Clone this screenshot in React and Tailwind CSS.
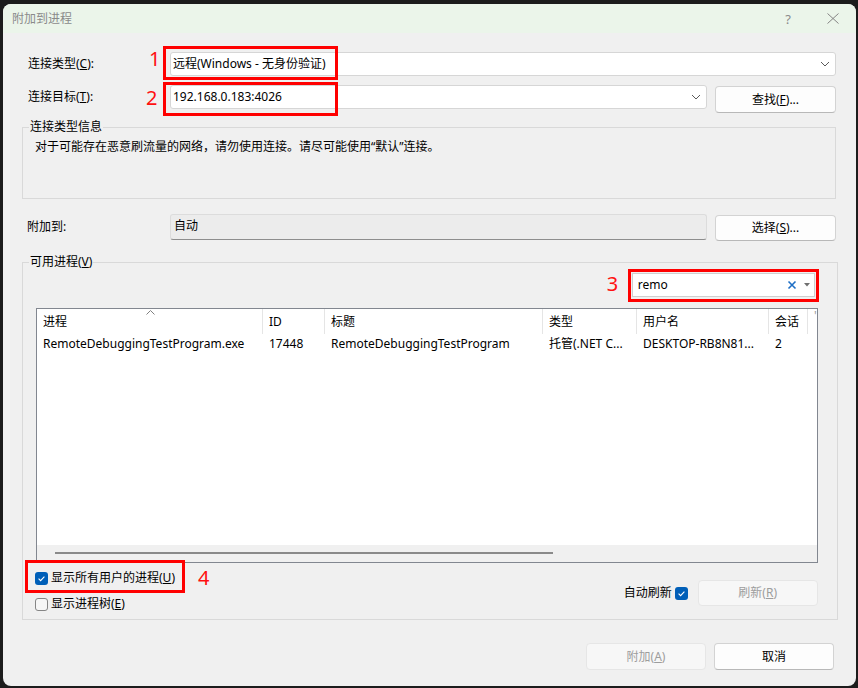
import React from "react";

const columns = [
  { label: "进程", cls: "w-[226px]", value: "RemoteDebuggingTestProgram.exe" },
  { label: "ID", cls: "w-[62px]", value: "17448" },
  { label: "标题", cls: "w-[218px]", value: "RemoteDebuggingTestProgram" },
  { label: "类型", cls: "w-[94px]", value: "托管(.NET C..." },
  { label: "用户名", cls: "w-[132px]", value: "DESKTOP-RB8N81..." },
  { label: "会话", cls: "w-[39px]", value: "2" },
];

function Chevron() {
  return (
    <svg width="10" height="6" viewBox="0 0 10 6" className="shrink-0">
      <path d="M1 1 L5 5 L9 1" fill="none" stroke="#5a5a5a" strokeWidth="1" />
    </svg>
  );
}

function Check({ checked }) {
  if (!checked) {
    return <span className="block w-[13px] h-[13px] rounded-[3px] border border-[#858585] bg-[#f6f6f6] shrink-0" />;
  }
  return (
    <span className="flex items-center justify-center w-[13px] h-[13px] rounded-[3px] bg-[#005fb8] shrink-0">
      <svg width="13" height="13" viewBox="0 0 13 13">
        <path d="M3.6 6.7 L5.6 8.6 L9.4 4.6" fill="none" stroke="#ffffff" strokeWidth="1.1" />
      </svg>
    </span>
  );
}

function Button({ children, disabled, className = "" }) {
  return (
    <div
      className={`flex items-center justify-center rounded-[4px] border ${
        disabled
          ? "bg-[#f7f7f7] border-[#e6e6e6] text-[#9d9d9d]"
          : "bg-[#fdfdfd] border-[#d3d3d3] border-b-[#b8b8b8] text-black"
      } ${className}`}
    >
      {children}
    </div>
  );
}

function Mark({ children, className }) {
  return (
    <span className={`absolute text-[20px] leading-[24px] text-[#ff1010] font-['Noto_Sans',sans-serif] ${className}`}>
      {children}
    </span>
  );
}

export default function App() {
  return (
    <div className="w-[858px] h-[688px] bg-[#1c1c1c] pt-[4px] pl-[3px] text-[12px] leading-[16px] text-black font-['Noto_Sans','Noto_Sans_CJK_SC',sans-serif]">
      <div className="w-[853px] h-[682px] bg-[#f0f0f0] rounded-[8px] overflow-hidden flex flex-col">
        {/* title bar */}
        <div className="h-[29px] bg-[#ebf5ea] flex items-center pl-[9px] pr-[13px] text-[#8a8a8a] shrink-0">
          <span>附加到进程</span>
          <span className="ml-auto w-[20px] text-center text-[13px] text-[#8a8a8a]">?</span>
          <span className="ml-[25px] w-[20px] flex justify-center">
            <svg width="12" height="11" viewBox="0 0 12 11">
              <path d="M0.5 0.5 L11.5 10.5 M11.5 0.5 L0.5 10.5" stroke="#858585" strokeWidth="1" />
            </svg>
          </span>
        </div>

        <div className="pl-[19px] pr-[20px] flex flex-col">
          {/* connection type */}
          <div className="flex items-center h-[24px] mt-[19px]">
            <span className="w-[148px] pl-[6px] shrink-0">连接类型(<u>C</u>):</span>
            <div className="relative flex-1 h-[24px] flex items-center bg-white border border-[#d6d6d6] rounded-[3px] pl-[2px] pr-[5px]">
              <span>远程(Windows - 无身份验证)</span>
              <span className="ml-auto"><Chevron /></span>
              <span className="absolute left-[-8px] top-[-7px] w-[175px] h-[34px] border-[3px] border-[#ff0000]" />
              <Mark className="left-[-22px] top-[-6px]">1</Mark>
            </div>
          </div>

          {/* connection target */}
          <div className="flex items-start mt-[9px]">
            <span className="w-[148px] pl-[6px] shrink-0 h-[24px] flex items-center">连接目标(<u>T</u>):</span>
            <div className="relative flex-1 h-[24px] flex items-center bg-white border border-[#d6d6d6] rounded-[3px] pl-[2px] pr-[5px]">
              <span>192.168.0.183:4026</span>
              <span className="ml-auto"><Chevron /></span>
              <span className="absolute left-[-8px] top-[-4px] w-[175px] h-[34px] border-[3px] border-[#ff0000]" />
              <Mark className="left-[-25px] top-[0px]">2</Mark>
            </div>
            <Button className="ml-[8px] w-[121px] h-[27px] mt-[1px]">查找(<u>F</u>)...</Button>
          </div>

          {/* info group */}
          <fieldset className="mt-[6px] h-[80px] border border-[#d9d9d9] px-[6px]">
            <legend className="px-[1px]">连接类型信息</legend>
            <div className="pl-[6px] pt-[4px]">对于可能存在恶意刷流量的网络，请勿使用连接。请尽可能使用“默认”连接。</div>
          </fieldset>

          {/* attach to */}
          <div className="flex items-start mt-[15px]">
            <span className="w-[148px] pl-[5px] shrink-0 h-[26px] flex items-center">附加到:</span>
            <div className="flex-1 h-[26px] flex items-center bg-[#ececec] border border-[#dcdcdc] border-b-[#8d8d8d] rounded-[3px] pl-[3px] pb-[2px]">
              自动
            </div>
            <Button className="ml-[8px] w-[121px] h-[26px] mt-[1px]">选择(<u>S</u>)...</Button>
          </div>

          {/* processes group */}
          <fieldset className="mt-[13px] h-[366px] border border-[#d9d9d9] px-[6px]">
            <legend className="px-[1px]">可用进程(<u>V</u>)</legend>
            <div className="pl-[7px] pr-[13px] flex flex-col">
              <div className="flex justify-end mt-[3px] mr-[3px]">
                <div className="relative w-[183px] h-[24px] bg-white border border-[#cfcfcf] flex items-center pl-[5px] pr-[3px]">
                  <span>remo</span>
                  <span className="ml-auto">
                    <svg width="10" height="10" viewBox="0 0 10 10">
                      <path d="M1.5 1.5 L8.5 8.5 M8.5 1.5 L1.5 8.5" stroke="#1f6fc5" strokeWidth="1.6" />
                    </svg>
                  </span>
                  <span className="ml-[7px] mr-[1px]">
                    <svg width="6" height="4" viewBox="0 0 6 4">
                      <path d="M0 0 L6 0 L3 3.5 Z" fill="#707070" />
                    </svg>
                  </span>
                  <span className="absolute left-[-5px] right-[-5px] top-[-5px] bottom-[-6px] border-[3px] border-[#ff0000]" />
                  <Mark className="left-[-26px] top-[-2px]">3</Mark>
                </div>
              </div>

              {/* list */}
              <div className="mt-[11px] h-[255px] border border-[#828790] bg-white flex flex-col">
                <div className="flex h-[25px] shrink-0">
                  {columns.map((c, i) => (
                    <div key={c.label} className={`relative ${c.cls} h-[25px] pl-[6px] flex items-center border-r border-[#e5e5e5] shrink-0`}>
                      {c.label}
                      {i === 0 && (
                        <svg width="9" height="5" viewBox="0 0 9 5" className="absolute left-[109px] top-[1px]">
                          <path d="M0.5 4.5 L4.5 0.5 L8.5 4.5" fill="none" stroke="#808080" strokeWidth="1" />
                        </svg>
                      )}
                    </div>
                  ))}
                  <div className="pl-[6px] text-[#9a9a9a] leading-[14px]">'</div>
                </div>
                <div className="flex h-[20px] shrink-0">
                  {columns.map((c) => (
                    <div key={c.label} className={`${c.cls} h-[20px] pl-[6px] flex items-center whitespace-nowrap overflow-hidden shrink-0`}>
                      {c.value}
                    </div>
                  ))}
                </div>
                <div className="flex-1" />
                <div className="h-[17px] bg-[#f0f0f0] shrink-0 pt-[7px]">
                  <div className="ml-[18px] w-[498px] h-[2px] bg-[#8a8a8a]" />
                </div>
              </div>

              {/* options */}
              <div className="flex items-start mt-[2px]">
                <div className="flex flex-col">
                  <div className="relative h-[26px] flex items-center gap-[3px] -ml-[1px]">
                    <Check checked />
                    <span>显示所有用户的进程(<u>U</u>)</span>
                    <span className="absolute left-[-10px] top-[-5px] w-[160px] h-[33px] border-[3px] border-[#ff0000]" />
                    <Mark className="left-[163px] top-[1px]">4</Mark>
                  </div>
                  <div className="h-[26px] flex items-center gap-[3px] -ml-[1px]">
                    <Check />
                    <span>显示进程树(<u>E</u>)</span>
                  </div>
                </div>
                <div className="ml-auto flex items-center mt-[15px]">
                  <span>自动刷新</span>
                  <span className="ml-[3px]"><Check checked /></span>
                  <Button disabled className="ml-[10px] w-[120px] h-[26px]">刷新(<u>R</u>)</Button>
                </div>
              </div>
            </div>
          </fieldset>

          {/* footer */}
          <div className="flex justify-end mt-[23px] pr-[2px]">
            <Button disabled className="w-[120px] h-[27px]">附加(<u>A</u>)</Button>
            <Button className="ml-[8px] w-[120px] h-[27px]">取消</Button>
          </div>
        </div>
      </div>
    </div>
  );
}
